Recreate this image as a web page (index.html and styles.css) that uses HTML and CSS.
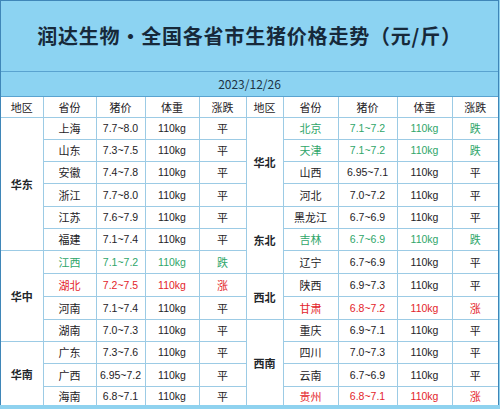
FILE: index.html
```html
<!DOCTYPE html>
<html lang="zh-CN">
<head>
<meta charset="utf-8">
<title>润达生物·全国各省市生猪价格走势</title>
<link rel="stylesheet" href="styles.css">
</head>
<body>
<div class="sheet">
  <div class="title">润达生物·全国各省市生猪价格走势（元/斤）</div>
  <div class="date">2023/12/26</div>
  <table class="grid">
    <colgroup>
      <col class="c1"><col class="c2"><col class="c3"><col class="c4"><col class="c5">
      <col class="c6"><col class="c7"><col class="c8"><col class="c9"><col class="c10">
    </colgroup>
    <thead>
      <tr class="head">
        <th>地区</th><th>省份</th><th>猪价</th><th>体重</th><th>涨跌</th>
        <th>地区</th><th>省份</th><th>猪价</th><th>体重</th><th>涨跌</th>
      </tr>
    </thead>
    <tbody>
      <tr>
        <td class="region" rowspan="6">华东</td>
        <td>上海</td><td class="num">7.7~8.0</td><td class="kg">110kg</td><td>平</td>
        <td class="region" rowspan="4">华北</td>
        <td class="down">北京</td><td class="num down">7.1~7.2</td><td class="kg down">110kg</td><td class="down">跌</td>
      </tr>
      <tr>
        <td>山东</td><td class="num">7.3~7.5</td><td class="kg">110kg</td><td>平</td>
        <td class="down">天津</td><td class="num down">7.1~7.2</td><td class="kg down">110kg</td><td class="down">跌</td>
      </tr>
      <tr>
        <td>安徽</td><td class="num">7.4~7.8</td><td class="kg">110kg</td><td>平</td>
        <td>山西</td><td class="num">6.95~7.1</td><td class="kg">110kg</td><td>平</td>
      </tr>
      <tr class="tall">
        <td>浙江</td><td class="num">7.7~8.0</td><td class="kg">110kg</td><td>平</td>
        <td>河北</td><td class="num">7.0~7.2</td><td class="kg">110kg</td><td>平</td>
      </tr>
      <tr>
        <td>江苏</td><td class="num">7.6~7.9</td><td class="kg">110kg</td><td>平</td>
        <td class="region" rowspan="3">东北</td>
        <td>黑龙江</td><td class="num">6.7~6.9</td><td class="kg">110kg</td><td>平</td>
      </tr>
      <tr>
        <td>福建</td><td class="num">7.1~7.4</td><td class="kg">110kg</td><td>平</td>
        <td class="down">吉林</td><td class="num down">6.7~6.9</td><td class="kg down">110kg</td><td class="down">跌</td>
      </tr>
      <tr class="tall">
        <td class="region" rowspan="4">华中</td>
        <td class="down">江西</td><td class="num down">7.1~7.2</td><td class="kg down">110kg</td><td class="down">跌</td>
        <td>辽宁</td><td class="num">6.7~6.9</td><td class="kg">110kg</td><td>平</td>
      </tr>
      <tr class="tall">
        <td class="up">湖北</td><td class="num up">7.2~7.5</td><td class="kg up">110kg</td><td class="up">涨</td>
        <td class="region" rowspan="2">西北</td>
        <td>陕西</td><td class="num">6.9~7.3</td><td class="kg">110kg</td><td>平</td>
      </tr>
      <tr class="tall">
        <td>河南</td><td class="num">7.1~7.4</td><td class="kg">110kg</td><td>平</td>
        <td class="up">甘肃</td><td class="num up">6.8~7.2</td><td class="kg up">110kg</td><td class="up">涨</td>
      </tr>
      <tr>
        <td>湖南</td><td class="num">7.0~7.3</td><td class="kg">110kg</td><td>平</td>
        <td class="region" rowspan="4">西南</td>
        <td>重庆</td><td class="num">6.9~7.1</td><td class="kg">110kg</td><td>平</td>
      </tr>
      <tr>
        <td class="region" rowspan="3">华南</td>
        <td>广东</td><td class="num">7.3~7.6</td><td class="kg">110kg</td><td>平</td>
        <td>四川</td><td class="num">7.0~7.3</td><td class="kg">110kg</td><td>平</td>
      </tr>
      <tr class="tall">
        <td>广西</td><td class="num">6.95~7.2</td><td class="kg">110kg</td><td>平</td>
        <td>云南</td><td class="num">6.7~6.9</td><td class="kg">110kg</td><td>平</td>
      </tr>
      <tr class="short">
        <td>海南</td><td class="num">6.8~7.1</td><td class="kg">110kg</td><td>平</td>
        <td class="up">贵州</td><td class="num up">6.8~7.1</td><td class="kg up">110kg</td><td class="up">涨</td>
      </tr>
    </tbody>
  </table>
</div>
</body>
</html>
```

FILE: styles.css
```css
html, body {
  margin: 0;
  padding: 0;
}
body {
  width: 500px;
  height: 409px;
  overflow: hidden;
  background: #8fd2ef;
  font-family: "Noto Sans CJK SC", "Noto Sans", sans-serif;
  color: #1e2226;
}
.sheet {
  width: 497px;
  border: 1px solid #3f86b8;
  border-bottom: none;
  background: #8cd3f2;
}
.title {
  height: 70px;
  line-height: 70px;
  text-align: center;
  font-size: 20px;
  font-weight: bold;
  letter-spacing: 0.8px;
  color: #17293a;
  border-bottom: 1px solid #5aa3d0;
}
.date {
  height: 24px;
  line-height: 24px;
  text-align: center;
  font-size: 12px;
  color: #1e3446;
  border-bottom: 1px solid #5aa3d0;
}
.grid {
  width: 497px;
  border-collapse: collapse;
  table-layout: fixed;
  background: #ffffff;
  border-style: hidden;
}
.c1 { width: 42px; }
.c2 { width: 53px; }
.c3 { width: 49px; }
.c4 { width: 54px; }
.c5 { width: 47px; }
.c6 { width: 37px; }
.c7 { width: 55px; }
.c8 { width: 59px; }
.c9 { width: 55px; }
.c10 { width: 46px; }
.grid th,
.grid td {
  border: 1px solid #9ccbe5;
  padding: 0;
  text-align: center;
  font-size: 11px;
  font-weight: normal;
  white-space: nowrap;
  overflow: hidden;
  line-height: 21px;
}
.grid th {
  line-height: 20px;
}
.grid tr.tall td {
  line-height: 22px;
}
.grid tr.short td {
  line-height: 18px;
}
.grid td.region,
.grid tr.tall td.region,
.grid tr.short td.region {
  font-weight: bold;
  color: #23272b;
  line-height: 16px;
}
.grid td.num {
  font-family: "Liberation Sans", Arial, sans-serif;
  font-size: 10.5px;
}
.grid td.kg {
  font-family: "Liberation Sans", Arial, sans-serif;
  font-size: 10.5px;
}
.grid tbody tr:last-child td {
  border-bottom: 1px solid #5aa3d0;
}
.grid .down {
  color: #2fa66a;
}
.grid .up {
  color: #e3242b;
}
```
